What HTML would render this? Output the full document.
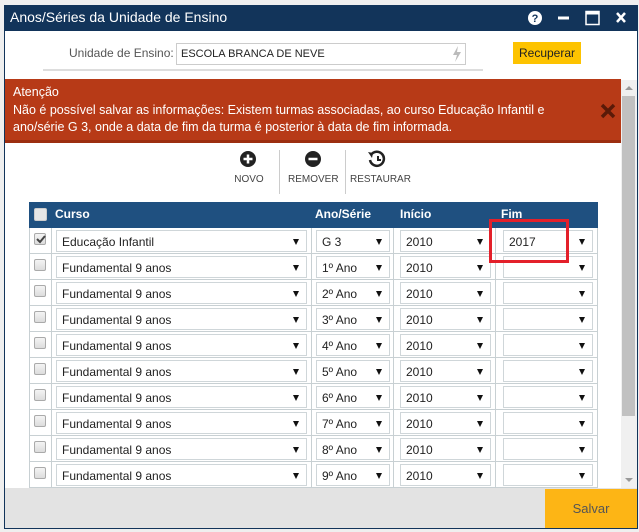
<!DOCTYPE html>
<html><head><meta charset="utf-8"><style>
*{box-sizing:border-box;margin:0;padding:0}
body{width:639px;height:532px;background:#efefef;font-family:"Segoe UI","Liberation Sans",sans-serif;position:relative;overflow:hidden;font-size:12px;color:#222}
.a{position:absolute}
.win{left:4px;top:5px;width:634px;height:524px;background:#fff;border:1px solid #12345a}
.title{left:4px;top:5px;width:634px;height:26px;background:#12345a;color:#fff;font-size:14px;line-height:25px;padding-left:6px}
.sel{position:absolute;height:22px;border:1px solid #cfd6d9;background:#fff;font-size:12px;line-height:22px;padding-left:5px}
.sel:after{content:"";position:absolute;right:7px;top:8px;border-left:3.5px solid transparent;border-right:3.5px solid transparent;border-top:6px solid #111}
.cb{position:absolute;left:5px;width:12px;height:12px;border:1px solid #aaa;border-radius:2px;background:linear-gradient(#f4f4f4,#dcdcdc)}
.row{position:absolute;left:29px;width:569px;height:26px;border-bottom:1px solid #c8d0d3;background:#fff}
.vl{position:absolute;top:0;width:1px;height:26px;background:#c8d0d3}
.tb{position:absolute;top:174px;font-size:10px;color:#444;text-align:center}
</style></head><body>
<div class="a win"></div>
<div class="a title">Anos/Séries da Unidade de Ensino</div>
<svg class="a" style="left:526px;top:9px" width="110" height="18">
<circle cx="9" cy="9" r="7" fill="#fff"/><text x="9" y="13" font-size="11" font-weight="bold" text-anchor="middle" fill="#12345a" font-family="Liberation Sans">?</text>
<rect x="32" y="7.5" width="11" height="3" fill="#fff"/>
<rect x="60" y="2.5" width="13" height="13" fill="none" stroke="#fff" stroke-width="1.5"/><rect x="60" y="2.5" width="13" height="3" fill="#fff"/>
<path d="M91 4l8 9M99 4l-8 9" stroke="#fff" stroke-width="2.5"/>
</svg>
<div class="a" style="left:69px;top:46px;color:#555;font-size:12px">Unidade de Ensino:</div>
<div class="a" style="left:176px;top:43px;width:290px;height:22px;border:1px solid #ccc;font-size:11px;line-height:20px;padding-left:4px">ESCOLA BRANCA DE NEVE</div>
<svg class="a" style="left:451px;top:46px" width="12" height="16"><path d="M7 0L2 9h4l-2 7 6-10H6z" fill="#bbb"/></svg>
<div class="a" style="left:513px;top:42px;width:68px;height:22px;background:#fdc300;font-size:12px;line-height:22px;text-align:center">Recuperar</div>
<div class="a" style="left:43px;top:69px;width:440px;height:2px;background:#ddd"></div>
<div class="a" style="left:5px;top:79px;width:616px;height:64px;background:#b73a17;border-bottom:3px solid #9c2e10;color:#fff;font-size:12.5px;line-height:17.5px;padding:5px 0 0 8px">Atenção<br>Não é possível salvar as informações: Existem turmas associadas, ao curso Educação Infantil e<br>ano/série G 3, onde a data de fim da turma é posterior à data de fim informada.</div>
<svg class="a" style="left:600px;top:103px" width="16" height="16"><path d="M2 2l12 12M14 2L2 14" stroke="#5a1a08" stroke-width="3.5"/></svg>
<div class="a" style="left:621px;top:80px;width:16px;height:408px;background:#f0f0f0"></div>
<div class="a" style="left:622px;top:96px;width:13px;height:320px;background:#c1c1c1"></div>
<svg class="a" style="left:623px;top:84px" width="12" height="8"><path d="M2 6l4-4 4 4z" fill="#999"/></svg>
<svg class="a" style="left:623px;top:476px" width="12" height="8"><path d="M2 2l4 4 4-4z" fill="#999"/></svg>
<svg class="a" style="left:239px;top:150px" width="90" height="20">
<circle cx="9" cy="9" r="8" fill="#222"/><path d="M9 4.5v9M4.5 9h9" stroke="#fff" stroke-width="2.5"/>
<circle cx="74" cy="9" r="8" fill="#222"/><path d="M69.5 9h9" stroke="#fff" stroke-width="2.5"/>
</svg>
<svg class="a" style="left:367px;top:150px" width="20" height="20"><path d="M4 5a7 7 0 1 1-1 5" fill="none" stroke="#222" stroke-width="2.5"/><path d="M1 2l5 1-1 5z" fill="#222"/><path d="M11 6v4h3" fill="none" stroke="#222" stroke-width="2"/></svg>
<div class="tb" style="left:231px;width:36px">NOVO</div>
<div class="tb" style="left:288px;width:50px">REMOVER</div>
<div class="tb" style="left:350px;width:56px">RESTAURAR</div>
<div class="a" style="left:279px;top:150px;width:1px;height:44px;background:#ccc"></div>
<div class="a" style="left:345px;top:150px;width:1px;height:44px;background:#ccc"></div>
<div class="a" style="left:29px;top:202px;width:569px;height:26px;background:#1f5080;color:#fff;font-size:12px;font-weight:bold;line-height:24px">
<div class="cb" style="left:5px;top:6px;width:13px;height:13px;background:#e6e6e6;border-color:#ccc"></div>
<span class="a" style="left:26px">Curso</span><span class="a" style="left:286px">Ano/Série</span><span class="a" style="left:371px">Início</span><span class="a" style="left:472px">Fim</span></div>
<div id="rows"></div>
<div class="a" style="left:489px;top:219px;width:80px;height:44px;border:3px solid #e3202a"></div>
<div class="a" style="left:5px;top:488px;width:632px;height:40px;background:#e3e3e3"></div>
<div class="a" style="left:545px;top:489px;width:92px;height:39px;background:#fdb515;color:#555;font-size:13px;line-height:40px;text-align:center">Salvar</div>
<script>
var d=[["Educação Infantil","G 3","2017"],["Fundamental 9 anos","1º Ano",""],["Fundamental 9 anos","2º Ano",""],["Fundamental 9 anos","3º Ano",""],["Fundamental 9 anos","4º Ano",""],["Fundamental 9 anos","5º Ano",""],["Fundamental 9 anos","6º Ano",""],["Fundamental 9 anos","7º Ano",""],["Fundamental 9 anos","8º Ano",""],["Fundamental 9 anos","9º Ano",""]];
var h="";d.forEach(function(r,i){var t=228+i*26;
h+='<div class="row" style="top:'+t+'px"><div class="vl" style="left:0"></div><div class="vl" style="left:22px"></div><div class="vl" style="left:282px"></div><div class="vl" style="left:364px"></div><div class="vl" style="left:466px"></div><div class="vl" style="left:568px"></div>'+
'<div class="cb" style="top:5px">'+(i==0?'<svg width="11" height="11" style="position:absolute;left:0;top:0"><path d="M2 5l3 3 5-6" fill="none" stroke="#444" stroke-width="2"/></svg>':'')+'</div>'+
'<div class="sel" style="left:27px;top:2px;width:251px">'+r[0]+'</div><div class="sel" style="left:287px;top:2px;width:74px">'+r[1]+'</div><div class="sel" style="left:371px;top:2px;width:91px">2010</div><div class="sel" style="left:474px;top:2px;width:90px">'+r[2]+'</div></div>';});
document.getElementById("rows").innerHTML=h;
</script>
</body></html>
